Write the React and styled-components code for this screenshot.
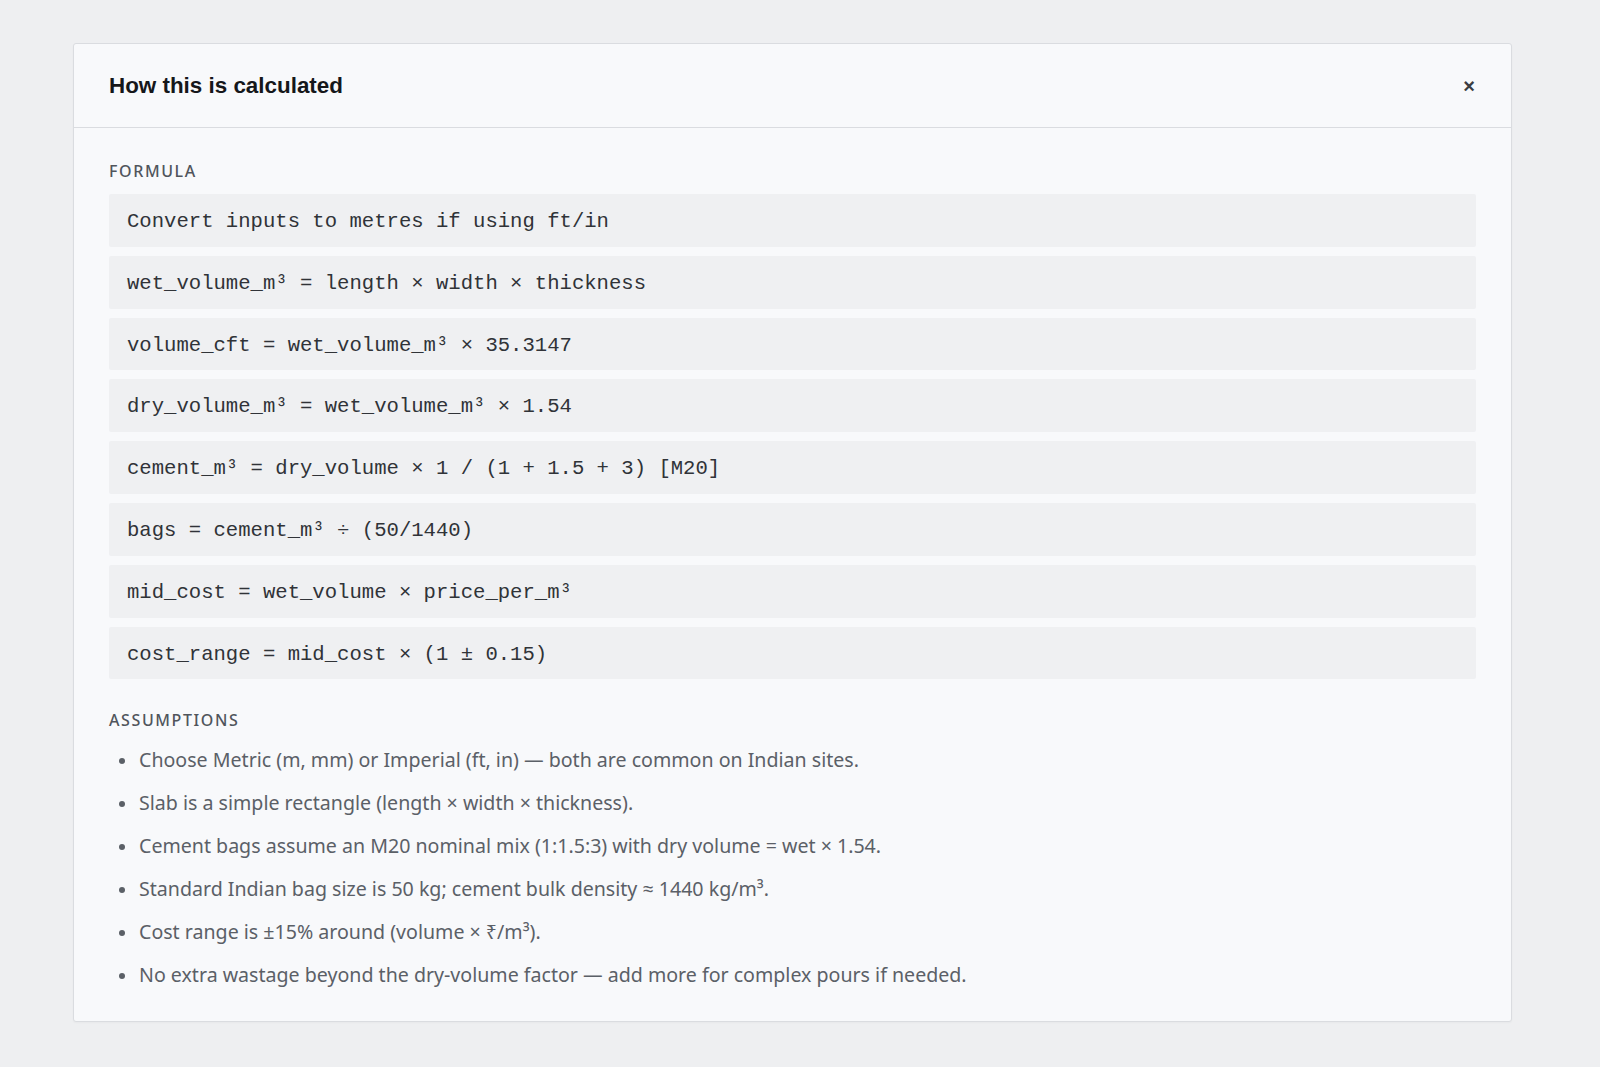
import styled, { createGlobalStyle } from "styled-components";

const formulas = [
  "Convert inputs to metres if using ft/in",
  "wet_volume_m³ = length × width × thickness",
  "volume_cft = wet_volume_m³ × 35.3147",
  "dry_volume_m³ = wet_volume_m³ × 1.54",
  "cement_m³ = dry_volume × 1 / (1 + 1.5 + 3) [M20]",
  "bags = cement_m³ ÷ (50/1440)",
  "mid_cost = wet_volume × price_per_m³",
  "cost_range = mid_cost × (1 ± 0.15)",
];

const assumptions = [
  "Choose Metric (m, mm) or Imperial (ft, in) — both are common on Indian sites.",
  "Slab is a simple rectangle (length × width × thickness).",
  "Cement bags assume an M20 nominal mix (1:1.5:3) with dry volume = wet × 1.54.",
  "Standard Indian bag size is 50 kg; cement bulk density ≈ 1440 kg/m³.",
  "Cost range is ±15% around (volume × ₹/m³).",
  "No extra wastage beyond the dry-volume factor — add more for complex pours if needed.",
];

export default function App() {
  return (
    <>
      <GlobalStyle />
      <Page>
        <Panel>
          <Header>
            <Title>How this is calculated</Title>
            <CloseButton aria-label="Close">×</CloseButton>
          </Header>
          <Body>
            <SectionLabel>Formula</SectionLabel>
            <FormulaList>
              {formulas.map((f) => (
                <FormulaLine key={f}>{f}</FormulaLine>
              ))}
            </FormulaList>
            <SectionLabel $spaced>Assumptions</SectionLabel>
            <BulletList>
              {assumptions.map((a) => (
                <Bullet key={a}>{a}</Bullet>
              ))}
            </BulletList>
          </Body>
        </Panel>
      </Page>
    </>
  );
}

const GlobalStyle = createGlobalStyle`
  * { box-sizing: border-box; }
  html, body {
    margin: 0;
    background: #eeeff1;
    font-family: "Noto Sans", "Open Sans", sans-serif;
  }
`;

const Page = styled.div`
  min-height: 1067px;
  padding: 43px 88px 46px 73px;
  background: #eeeff1;
`;

const Panel = styled.section`
  background: #f8f9fb;
  border: 1px solid #dadce0;
  border-radius: 3px;
  box-shadow: 0 1px 2px rgba(0, 0, 0, 0.03);
`;

const Header = styled.header`
  display: flex;
  align-items: center;
  justify-content: space-between;
  height: 84px;
  padding: 0 30px 0 35px;
  border-bottom: 1px solid #dadce0;
`;

const Title = styled.h2`
  margin: 0;
  font-family: "Liberation Sans", Arial, sans-serif;
  font-size: 22.4px;
  font-weight: 700;
  color: #15171a;
`;

const CloseButton = styled.button`
  border: none;
  background: transparent;
  padding: 0 6px;
  font-family: "Liberation Sans", Arial, sans-serif;
  font-size: 20px;
  font-weight: 700;
  line-height: 1;
  color: #3a3d42;
  cursor: pointer;
`;

const Body = styled.div`
  padding: 32px 35px 30px 35px;
`;

const SectionLabel = styled.h3`
  margin: ${(p) => (p.$spaced ? "30px" : "0")} 0 0;
  font-family: "Noto Sans", sans-serif;
  font-size: 16px;
  line-height: 22px;
  font-weight: 500;
  letter-spacing: 0.1em;
  text-transform: uppercase;
  color: #50555c;
`;

const FormulaList = styled.div`
  display: flex;
  flex-direction: column;
  gap: 9px;
  margin-top: 12px;
`;

const FormulaLine = styled.div`
  background: #eff0f2;
  border-radius: 2px;
  padding: 14px 18px 10px;
  font-family: "Liberation Mono", "DejaVu Sans Mono", monospace;
  font-size: 20.6px;
  line-height: 28.8px;
  color: #303338;
  white-space: pre;
`;

const BulletList = styled.ul`
  margin: 14px 0 0;
  padding: 0 0 0 30px;
  list-style: none;
`;

const Bullet = styled.li`
  position: relative;
  margin: 0 0 12.2px;
  font-size: 19.6px;
  line-height: 30.7px;
  color: #5b6067;

  &:last-child {
    margin-bottom: 0;
  }

  &::before {
    content: "";
    position: absolute;
    left: -20px;
    top: 13px;
    width: 6px;
    height: 6px;
    border-radius: 50%;
    background: #5b6067;
  }
`;
